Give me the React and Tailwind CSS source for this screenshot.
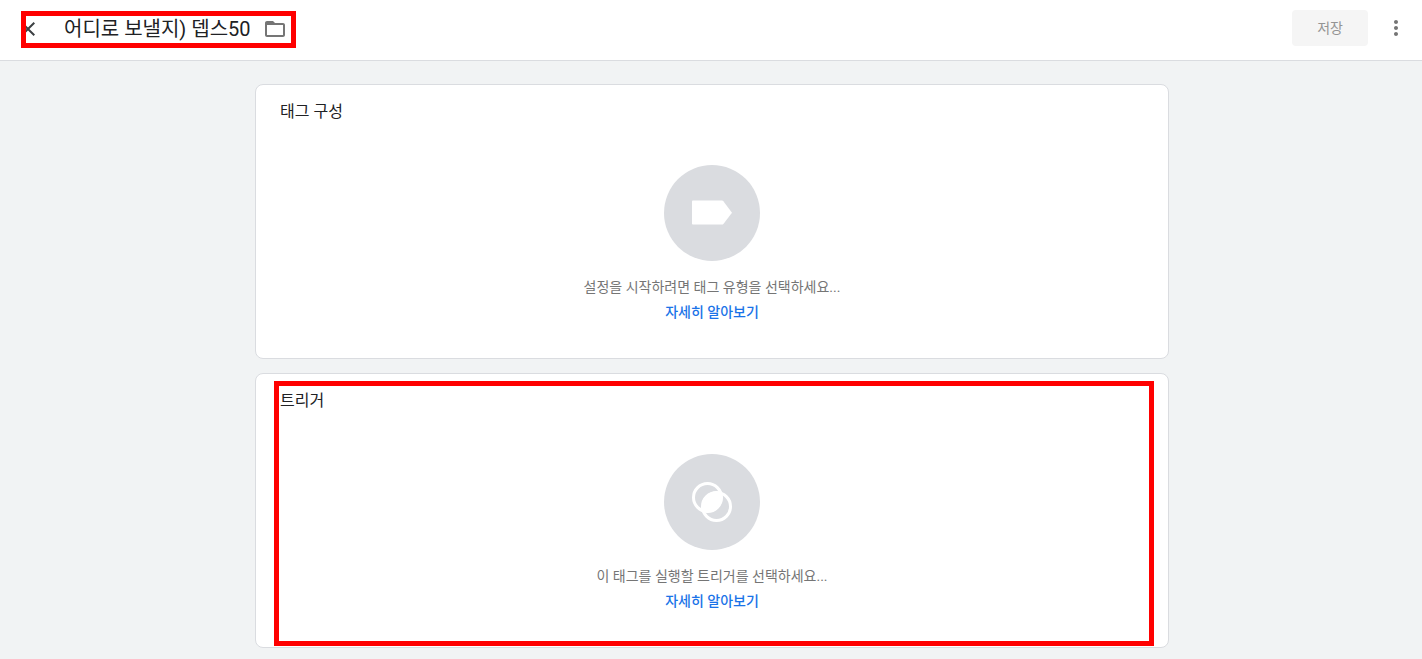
import { MdClose, MdFolderOpen, MdMoreVert } from "react-icons/md";

function TagIcon() {
  return (
    <svg width="40" height="40" viewBox="0 0 40 40" fill="#fff" aria-hidden="true">
      <path d="M.8 7.5H30c.6 0 1 .2 1.4.7L40 19.700l-8.600 11.200c-.4.400-.8.600-1.400.600H.8c-.5 0-.8-.3-.8-.8V8.300c0-.5.3-.8.8-.8z" />
    </svg>
  );
}

function TriggerIcon() {
  return (
    <svg width="40" height="40" viewBox="0 0 40 40" aria-hidden="true">
      <clipPath id="lens">
        <circle cx="15.500" cy="15.500" r="15" />
      </clipPath>
      <circle cx="24.500" cy="24.500" r="15" fill="#fff" clipPath="url(#lens)" />
      <g fill="none" stroke="#fff" strokeWidth="3">
        <circle cx="15.500" cy="15.500" r="14" />
        <circle cx="24.500" cy="24.500" r="14" />
      </g>
    </svg>
  );
}

function Card({ title, icon, hint, highlighted }) {
  return (
    <section className="relative rounded-lg border border-[#dadce0] bg-white px-6 pt-[15px] pb-[33px]">
      <h2 className="text-base leading-6 text-[#202124]">{title}</h2>
      <div className="mt-[41px] flex flex-col items-center">
        <div className="flex size-24 items-center justify-center rounded-full bg-[#dadce0]">
          {icon}
        </div>
        <p className="mt-3.5 text-sm leading-6 text-[#757575]">{hint}</p>
        <a href="#" className="text-sm leading-[26px] font-medium text-[#1a73e8]">
          자세히 알아보기
        </a>
      </div>
      {highlighted && (
        <div className="pointer-events-none absolute top-[7px] right-3.5 bottom-px left-[18px] border-5 border-[#ff0000]" />
      )}
    </section>
  );
}

export default function App() {
  return (
    <div className="min-h-screen bg-[#f1f3f4] font-['Roboto','Noto_Sans_CJK_KR',sans-serif]">
      <header className="relative flex items-center justify-between border-b border-[#dadce0] bg-white px-4 pt-2 pb-3">
        <div className="flex h-10 items-center pt-0.5">
          <button type="button" aria-label="닫기" className="text-[#3c4043]">
            <MdClose size={24} />
          </button>
          <input
            aria-label="태그 이름"
            defaultValue="어디로 보낼지) 뎁스50"
            className="ml-6 w-[199px] bg-transparent text-xl leading-7 text-[#202124] outline-none"
          />
          <button type="button" aria-label="폴더" className="text-[#757575]">
            <MdFolderOpen size={24} />
          </button>
        </div>
        <div className="flex items-center">
          <button
            type="button"
            disabled
            className="mr-4 h-9 rounded bg-[#f5f5f5] px-[25px] text-sm text-[#949494]"
          >
            저장
          </button>
          <button type="button" aria-label="더보기" className="-mr-0.5 text-[#757575]">
            <MdMoreVert size={24} />
          </button>
        </div>
        <div className="pointer-events-none absolute top-[11px] left-[21px] h-[37px] w-[275px] border-5 border-[#ff0000]" />
      </header>
      <main className="mx-auto flex max-w-[916px] flex-col gap-3.5 pt-[23px] pb-[11px] pl-0.5">
        <Card
          title="태그 구성"
          icon={<TagIcon />}
          hint="설정을 시작하려면 태그 유형을 선택하세요..."
        />
        <Card
          title="트리거"
          icon={<TriggerIcon />}
          hint="이 태그를 실행할 트리거를 선택하세요..."
          highlighted
        />
      </main>
    </div>
  );
}
